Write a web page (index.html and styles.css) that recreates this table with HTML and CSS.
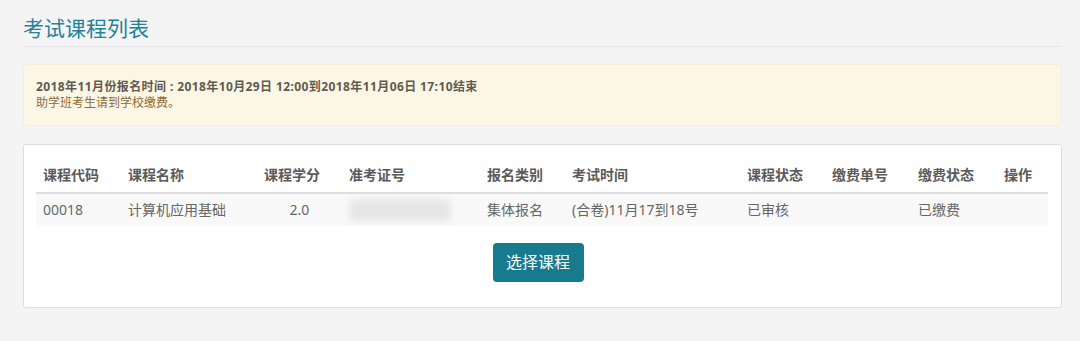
FILE: index.html
```html
<!DOCTYPE html>
<html lang="zh-CN">
<head>
	<meta charset="UTF-8">
	<title>考试课程列表</title>
	<link rel="stylesheet" href="styles.css">
</head>
<body>
	<div class="main">
		<h2 class="page-title">考试课程列表</h2>

		<div class="notice">
			<p class="notice-time">2018年11月份报名时间 : 2018年10月29日 12:00到2018年11月06日 17:10结束</p>
			<p class="notice-tip">助学班考生请到学校缴费。</p>
		</div>

		<div class="panel">
			<table class="course-table">
				<colgroup>
					<col style="width: 85px">
					<col style="width: 136px">
					<col style="width: 85px">
					<col style="width: 138px">
					<col style="width: 85px">
					<col style="width: 175px">
					<col style="width: 85px">
					<col style="width: 86px">
					<col style="width: 86px">
					<col>
				</colgroup>
				<thead>
					<tr>
						<th>课程代码</th>
						<th>课程名称</th>
						<th>课程学分</th>
						<th>准考证号</th>
						<th>报名类别</th>
						<th>考试时间</th>
						<th>课程状态</th>
						<th>缴费单号</th>
						<th>缴费状态</th>
						<th>操作</th>
					</tr>
				</thead>
				<tbody>
					<tr>
						<td>00018</td>
						<td>计算机应用基础</td>
						<td class="center">2.0</td>
						<td><span class="masked"></span></td>
						<td>集体报名</td>
						<td>(合卷)11月17到18号</td>
						<td>已审核</td>
						<td></td>
						<td>已缴费</td>
						<td></td>
					</tr>
				</tbody>
			</table>
			<div class="actions">
				<a href="javascript:;" class="btn-select">选择课程</a>
			</div>
		</div>
	</div>
</body>
</html>
```

FILE: styles.css
```css
* {padding: 0; margin: 0; box-sizing: border-box;}
body {
	background: #f4f4f4;
	font-family: "Noto Sans", "Noto Sans CJK SC", sans-serif;
	font-size: 14px;
	color: #666;
}
.main {
	margin: 0 18px 0 23px;
}
.page-title {
	margin-top: 14px;
	padding-bottom: 4px;
	line-height: 28px;
	font-size: 21px;
	font-weight: normal;
	color: #1f8299;
	border-bottom: 1px solid #e6e6e6;
}
.notice {
	margin-top: 17px;
	padding: 14px 12px;
	background: #fcf7e4;
	border: 1px solid #f6eed3;
	border-radius: 3px;
	font-size: 12px;
	line-height: 16px;
}
.notice-time {
	font-weight: bold;
	color: #5e5a52;
	letter-spacing: 0.4px;
}
.notice-tip {
	color: #8a6d3b;
}
.panel {
	margin-top: 18px;
	padding: 12px 13px 25px 12px;
	background: #fff;
	border: 1px solid #ddd;
	border-radius: 3px;
}
.course-table {
	width: 100%;
	border-collapse: collapse;
	table-layout: fixed;
}
.course-table th {
	padding: 8px 7px;
	line-height: 19px;
	text-align: left;
	font-weight: bold;
	color: #5a5a5a;
	border-bottom: 2px solid #ddd;
}
.course-table td {
	padding: 6px 7px;
	line-height: 20px;
	height: 32px;
	background: #f9f9f9;
	white-space: nowrap;
}
.course-table td.center {
	text-align: center;
}
/* 准考证号打码 */
.masked {
	display: block;
	width: 102px;
	height: 22px;
	margin: -1px 0;
	background: #e6e6e6;
	border-radius: 6px;
	filter: blur(3px);
}
.actions {
	margin-top: 17px;
	text-align: center;
	padding-right: 8px;
}
.btn-select {
	display: inline-block;
	width: 91px;
	height: 39px;
	line-height: 39px;
	background: #177b8d;
	border-radius: 4px;
	color: #fff;
	font-size: 16px;
	text-decoration: none;
}
```
